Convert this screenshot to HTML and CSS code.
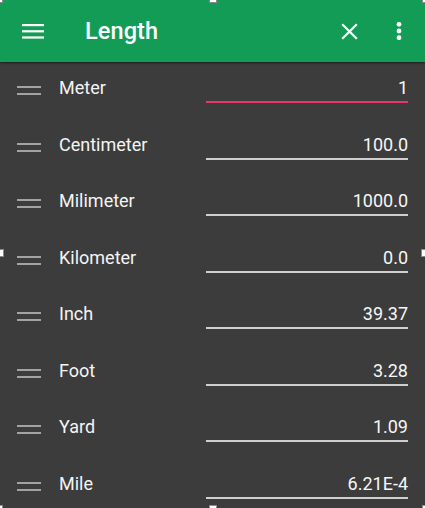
FILE: index.html
```html
<!DOCTYPE html>
<html lang="en">
<head>
<meta charset="utf-8">
<title>Length</title>
<link rel="stylesheet" href="styles.css">
</head>
<body>
<div class="app">
  <header class="toolbar">
    <button class="tb-btn menu" aria-label="Menu">
      <svg width="22" height="16" viewBox="0 0 22 16"><rect x="0" y="1" width="22" height="2.2" fill="#fff"/><rect x="0" y="7.2" width="22" height="2.2" fill="#fff"/><rect x="0" y="13.4" width="22" height="2.2" fill="#fff"/></svg>
    </button>
    <h1 class="title">Length</h1>
    <button class="tb-btn close" aria-label="Clear">
      <svg width="17" height="17" viewBox="0 0 17 17"><path d="M1.2 1.2 L15.8 15.8 M15.8 1.2 L1.2 15.8" stroke="#fff" stroke-width="2.2" fill="none"/></svg>
    </button>
    <button class="tb-btn more" aria-label="More">
      <svg width="6" height="20" viewBox="0 0 6 20"><circle cx="3" cy="3.3" r="2.4" fill="#fff"/><circle cx="3" cy="10" r="2.4" fill="#fff"/><circle cx="3" cy="16.7" r="2.4" fill="#fff"/></svg>
    </button>
  </header>
  <ul class="units">
    <li class="row"><span class="drag"></span><span class="label">Meter</span><span class="field active">1</span></li>
    <li class="row"><span class="drag"></span><span class="label">Centimeter</span><span class="field">100.0</span></li>
    <li class="row"><span class="drag"></span><span class="label">Milimeter</span><span class="field">1000.0</span></li>
    <li class="row"><span class="drag"></span><span class="label">Kilometer</span><span class="field">0.0</span></li>
    <li class="row"><span class="drag"></span><span class="label">Inch</span><span class="field">39.37</span></li>
    <li class="row"><span class="drag"></span><span class="label">Foot</span><span class="field">3.28</span></li>
    <li class="row"><span class="drag"></span><span class="label">Yard</span><span class="field">1.09</span></li>
    <li class="row"><span class="drag"></span><span class="label">Mile</span><span class="field">6.21E-4</span></li>
  </ul>
  <span class="handle h-tl"></span>
  <span class="handle h-tc"></span>
  <span class="handle h-tr"></span>
  <span class="handle h-ml"></span>
  <span class="handle h-mr"></span>
  <span class="handle h-bl"></span>
  <span class="handle h-bc"></span>
  <span class="handle h-br"></span>
</div>
</body>
</html>
```
FILE: styles.css
```css
* { box-sizing: border-box; }
html, body {
  margin: 0;
  padding: 0;
  width: 425px;
  height: 508px;
  overflow: hidden;
  background: #3c3c3c;
  font-family: Roboto, "Noto Sans", "Liberation Sans", sans-serif;
}
.app {
  position: relative;
  width: 425px;
  height: 508px;
  overflow: hidden;
  background: #3c3c3c;
}
.toolbar {
  height: 62px;
  background: #139c56;
  display: flex;
  align-items: center;
  padding: 0 0 0 22px;
  box-shadow: 0 1px 2px rgba(0,0,0,0.55);
  position: relative;
  z-index: 1;
}
.tb-btn {
  background: none;
  border: 0;
  padding: 0;
  display: flex;
  align-items: center;
  justify-content: center;
  cursor: pointer;
}
.menu { width: 22px; height: 16px; margin-top: -1px; }
.title {
  margin: 0 0 0 41px;
  flex: 1;
  color: #fff;
  font-size: 23.5px;
  font-weight: 500;
  line-height: 30px;
  letter-spacing: 0.1px;
  padding-bottom: 1px;
}
.close { width: 17px; height: 17px; margin-right: 38px; margin-top: 1px; }
.more { width: 6px; height: 20px; margin-right: 23px; }
.units {
  list-style: none;
  margin: 0;
  padding: 0;
}
.row {
  height: 56.5px;
  display: grid;
  grid-template-columns: 24px 1fr 202px;
  column-gap: 18px;
  padding: 0 17px 0 17px;
  align-items: start;
}
.drag {
  margin-top: 24px;
  height: 9px;
  border-top: 2.5px solid #a3a3a3;
  border-bottom: 2.5px solid #a3a3a3;
}
.label {
  padding-top: 14px;
  line-height: 24px;
  font-size: 18px;
  color: #f4f4f4;
}
.field {
  padding-top: 14px;
  padding-bottom: 1px;
  line-height: 24px;
  font-size: 18px;
  color: #f6f6f6;
  text-align: right;
  border-bottom: 2px solid #cfcfcf;
}
.field.active { border-bottom-color: #e8386b; }
.handle {
  position: absolute;
  width: 8px;
  height: 8px;
  background: #fff;
  border: 1px solid #8a8a8a;
  z-index: 5;
}
.h-tl { left: -5px; top: -5px; }
.h-tc { left: 209px; top: -5px; }
.h-tr { right: -5px; top: -5px; }
.h-ml { left: -4px; top: 249px; }
.h-mr { right: -4px; top: 249px; }
.h-bl { left: -5px; bottom: -5px; }
.h-bc { left: 209px; bottom: -5px; }
.h-br { right: -5px; bottom: -5px; }
```
